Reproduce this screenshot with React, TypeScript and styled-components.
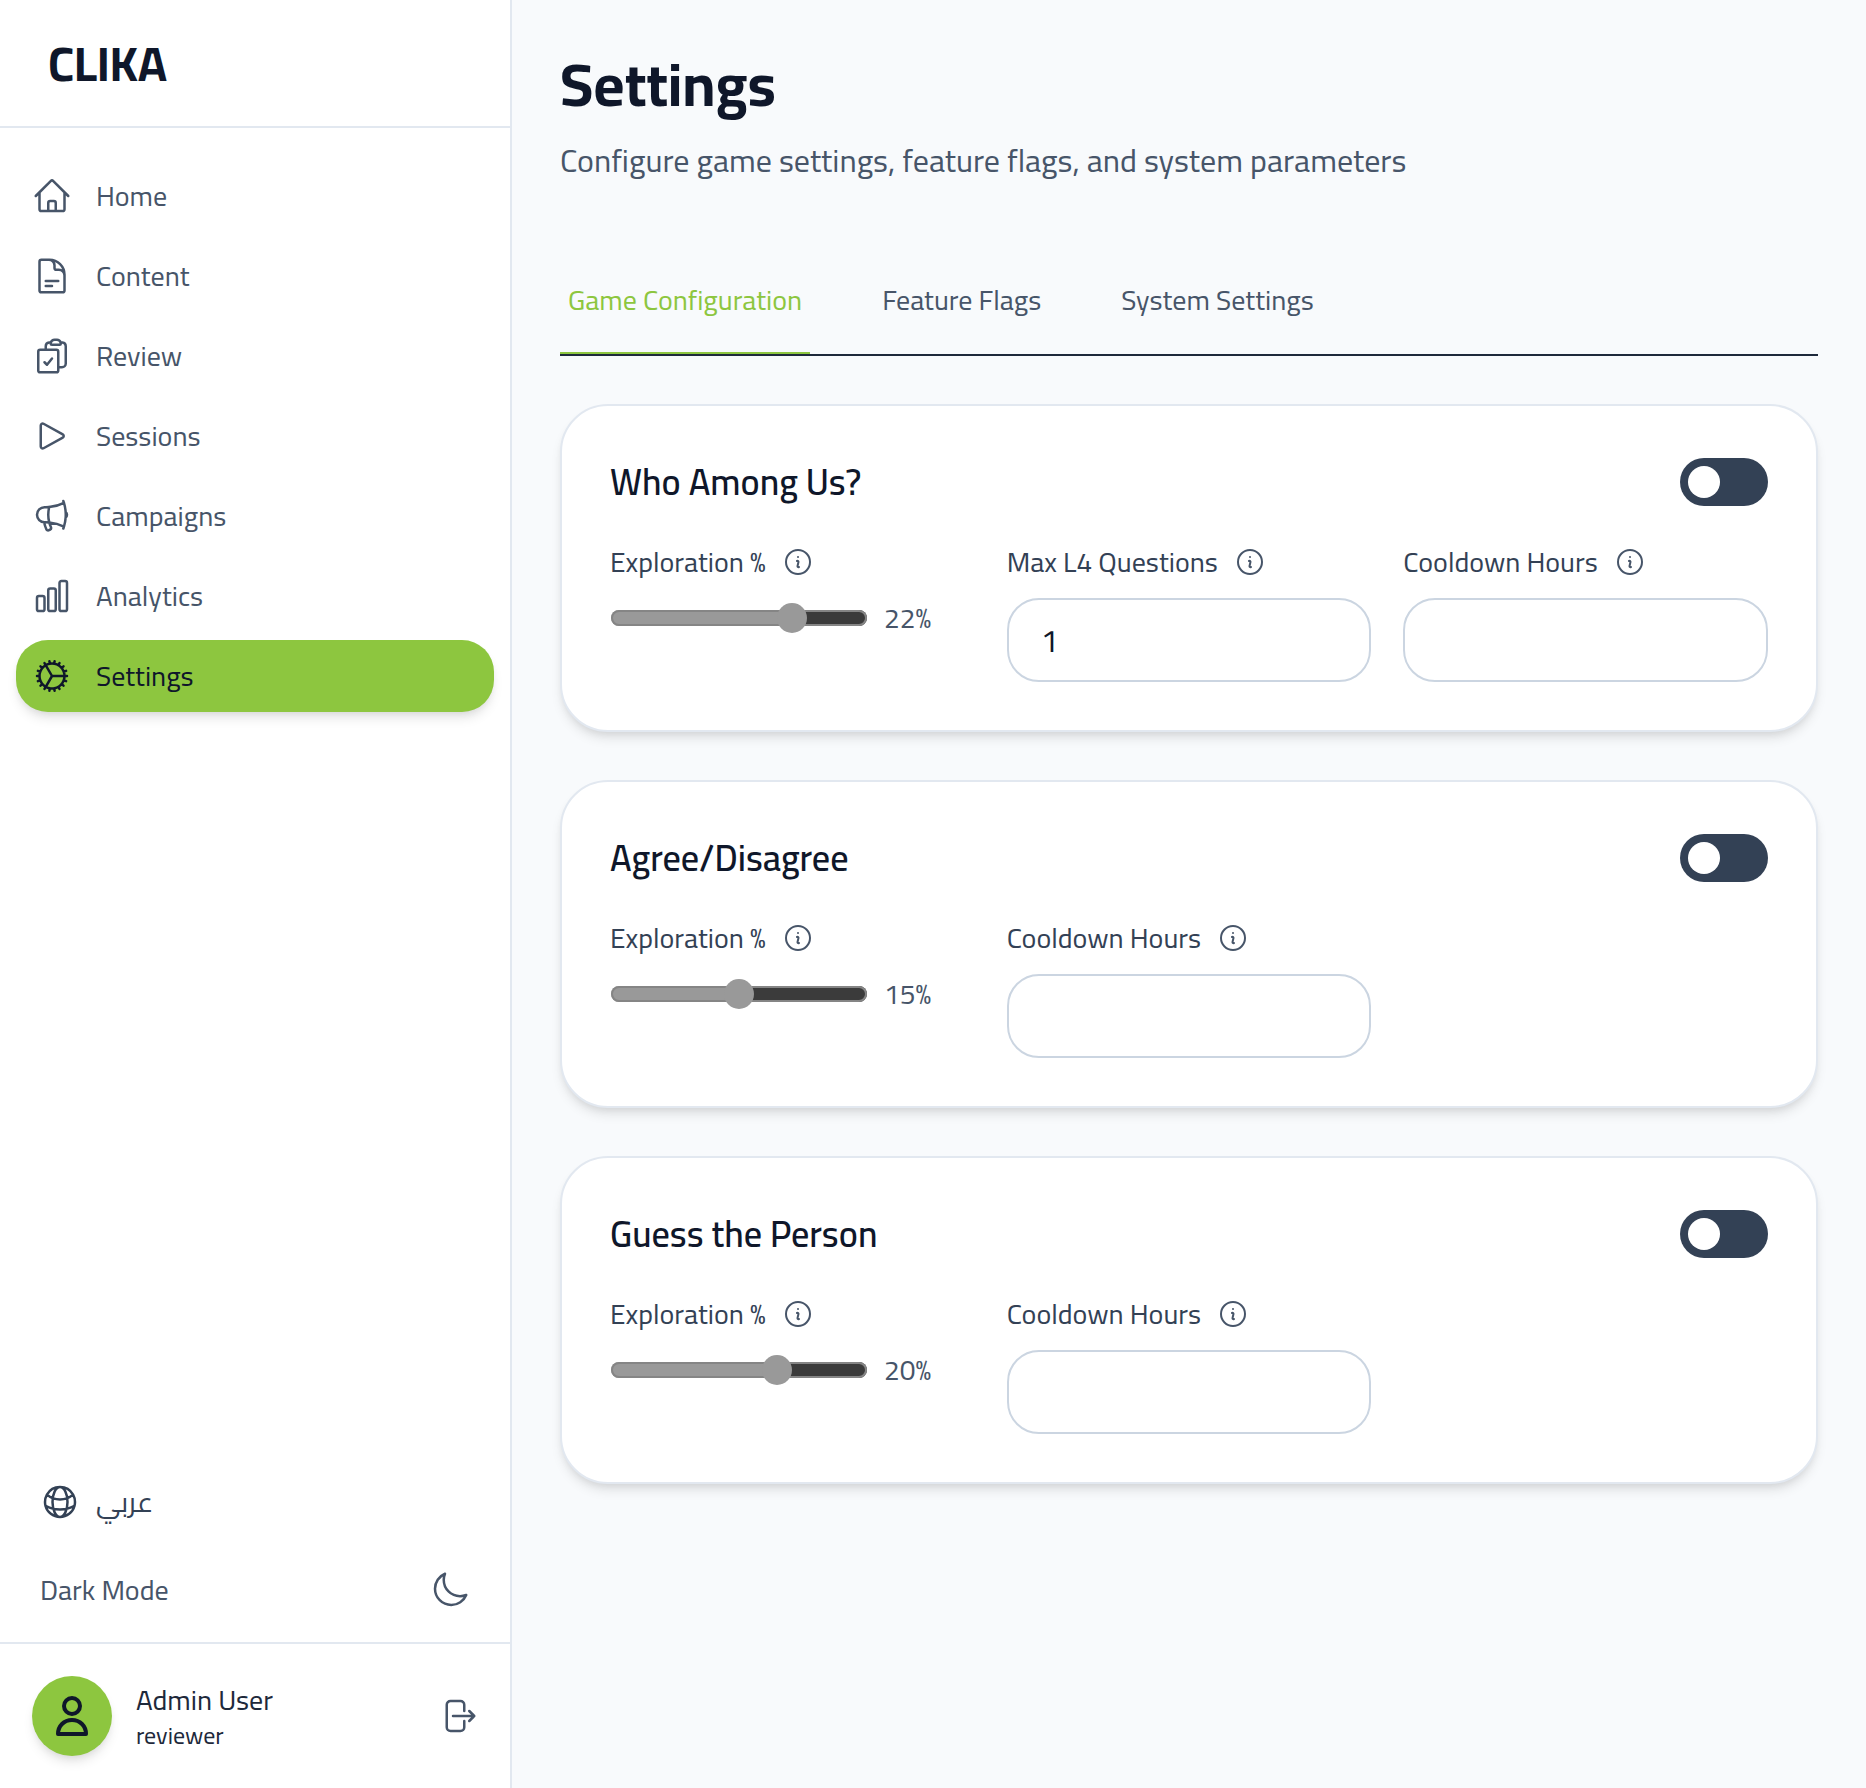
import React, { useId, useState } from "react";
import styled, { createGlobalStyle, css } from "styled-components";
import {
  HiOutlineArrowRightOnRectangle,
  HiOutlineChartBar,
  HiOutlineClipboardDocumentCheck,
  HiOutlineCog,
  HiOutlineDocumentText,
  HiOutlineGlobeAlt,
  HiOutlineHome,
  HiOutlineInformationCircle,
  HiOutlineMegaphone,
  HiOutlineMoon,
  HiOutlinePlay,
} from "react-icons/hi2";

const color = {
  page: "#f8fafc",
  surface: "#ffffff",
  line: "#e2e8f0",
  field: "#cbd5e1",
  muted: "#475569",
  label: "#334155",
  strong: "#1e293b",
  ink: "#0f172a",
  accent: "#8dc63f",
};

const shadow =
  "0 8px 12px -2px rgba(0, 0, 0, 0.1), 0 4px 8px -4px rgba(0, 0, 0, 0.1)";

const GlobalStyle = createGlobalStyle`
  *, *::before, *::after { box-sizing: border-box; }
  body {
    margin: 0;
    background: ${color.page};
    color: ${color.ink};
    font-family: Cairo, Roboto, "DejaVu Sans", sans-serif;
    font-size: 28px;
    line-height: 40px;
    -webkit-font-smoothing: antialiased;
  }
  button, input { font: inherit; color: inherit; }
  button { border: 0; padding: 0; background: none; cursor: pointer; }
  h1, h2, p { margin: 0; }
`;

const Shell = styled.div`
  display: flex;
  min-height: 100vh;
`;

const Sidebar = styled.aside`
  position: sticky;
  top: 0;
  display: flex;
  flex-direction: column;
  flex: 0 0 512px;
  height: 100vh;
  background: ${color.surface};
  border-right: 2px solid ${color.line};
`;

const Brand = styled.div`
  padding: 31px 48px;
  border-bottom: 2px solid ${color.line};
  font-size: 48px;
  font-weight: 700;
  line-height: 64px;
`;

const Nav = styled.nav`
  display: flex;
  flex: 1;
  flex-direction: column;
  gap: 8px;
  padding: 32px 16px;
`;

const NavLink = styled.a<{ $active: boolean }>`
  display: flex;
  align-items: center;
  gap: 24px;
  height: 72px;
  padding: 0 16px;
  border-radius: 32px;
  color: ${color.muted};
  text-decoration: none;

  svg {
    flex: none;
    width: 40px;
    height: 40px;
  }

  ${({ $active }) =>
    $active &&
    css`
      background: ${color.accent};
      color: ${color.ink};
      box-shadow: ${shadow};
    `}
`;

const Preferences = styled.div`
  display: flex;
  flex-direction: column;
  gap: 16px;
  padding: 16px;
  border-bottom: 2px solid ${color.line};
`;

const PreferenceButton = styled.button<{ $spread?: boolean }>`
  display: flex;
  align-items: center;
  justify-content: ${({ $spread }) => ($spread ? "space-between" : "flex-start")};
  gap: 16px;
  height: 72px;
  padding: 0 24px;
  color: ${({ $spread }) => ($spread ? color.muted : color.label)};

  svg {
    width: 40px;
    height: 40px;
  }
`;

const Account = styled.div`
  display: flex;
  align-items: center;
  gap: 24px;
  padding: 32px;
  color: ${color.strong};
`;

const Avatar = styled.div`
  display: grid;
  place-items: center;
  flex: none;
  width: 80px;
  height: 80px;
  border-radius: 50%;
  background: ${color.accent};
  color: ${color.ink};
  box-shadow: ${shadow};
`;

const Identity = styled.div`
  flex: 1;
`;

const Role = styled.p`
  font-size: 24px;
  line-height: 32px;
`;

const IconButton = styled.button<{ $size: number }>`
  display: block;
  flex: none;
  color: ${color.muted};

  svg {
    display: block;
    width: ${({ $size }) => $size}px;
    height: ${({ $size }) => $size}px;
  }
`;

const Main = styled.main`
  flex: 1;
  min-width: 0;
  padding: 48px;
`;

const Title = styled.h1`
  font-size: 60px;
  font-weight: 700;
  line-height: 72px;
`;

const Subtitle = styled.p`
  padding-top: 16px;
  color: ${color.muted};
  font-size: 32px;
  line-height: 48px;
`;

const Tabs = styled.div`
  display: flex;
  gap: 64px;
  margin: 64px 0 48px;
  border-bottom: 2px solid ${color.strong};
`;

const Tab = styled.button<{ $active: boolean }>`
  padding: 32px 8px;
  border-bottom: 2px solid
    ${({ $active }) => ($active ? color.accent : "transparent")};
  color: ${({ $active }) => ($active ? color.accent : color.muted)};
`;

const Cards = styled.div`
  display: flex;
  flex-direction: column;
  gap: 48px;
`;

const Card = styled.section`
  padding: 48px;
  border: 2px solid ${color.line};
  border-radius: 48px;
  background: ${color.surface};
  box-shadow: ${shadow};
`;

const CardHeader = styled.div`
  display: flex;
  align-items: center;
  justify-content: space-between;
  margin-bottom: 32px;
`;

const CardTitle = styled.h2`
  font-size: 36px;
  font-weight: 600;
  line-height: 56px;
`;

const Toggle = styled.input`
  appearance: none;
  width: 88px;
  height: 48px;
  margin: 0;
  padding: 8px;
  border-radius: 24px;
  background: ${color.label};
  cursor: pointer;

  &::before {
    content: "";
    display: block;
    width: 32px;
    height: 32px;
    border-radius: 50%;
    background: ${color.surface};
  }

  &:checked {
    background: ${color.accent};
  }

  &:checked::before {
    margin-left: 40px;
  }
`;

const Fields = styled.div`
  display: grid;
  grid-template-columns: repeat(3, minmax(0, 1fr));
  gap: 32px;
`;

const FieldHeader = styled.div`
  display: flex;
  align-items: center;
  gap: 16px;
  margin-bottom: 16px;
  color: ${color.label};
`;

const NumberInput = styled.input`
  display: block;
  width: 100%;
  height: 84px;
  padding: 0 32px;
  border: 2px solid ${color.field};
  border-radius: 32px;
  background: ${color.surface};
  font-size: 32px;
`;

const SliderRow = styled.div`
  display: flex;
  align-items: center;
  gap: 16px;
  color: ${color.muted};
`;

const Slider = styled.input`
  appearance: none;
  width: 256px;
  height: 16px;
  margin: 0 1px;
  border-radius: 8px;
  background: linear-gradient(
    to right,
    #999999 var(--filled),
    #3b3b3b var(--filled)
  );
  box-shadow: inset 0 0 0 2px #858585;

  &::-webkit-slider-thumb {
    appearance: none;
    width: 30px;
    height: 30px;
    border-radius: 50%;
    background: #999999;
  }
`;

const UserGlyph = () => (
  <svg width="40" height="40" viewBox="0 0 40 40" fill="none" stroke="currentColor" strokeWidth="4" strokeLinejoin="round" aria-hidden="true">
    <circle cx="20" cy="10" r="8" />
    <path d="M6 38C6 30 12 24 20 24s14 6 14 14z" />
  </svg>
);

const navItems = [
  { label: "Home", Icon: HiOutlineHome },
  { label: "Content", Icon: HiOutlineDocumentText },
  { label: "Review", Icon: HiOutlineClipboardDocumentCheck },
  { label: "Sessions", Icon: HiOutlinePlay },
  { label: "Campaigns", Icon: HiOutlineMegaphone },
  { label: "Analytics", Icon: HiOutlineChartBar },
  { label: "Settings", Icon: HiOutlineCog },
];

const tabs = ["Game Configuration", "Feature Flags", "System Settings"];

const games = [
  { name: "Who Among Us?", exploration: 22, maxQuestions: 1 },
  { name: "Agree/Disagree", exploration: 15 },
  { name: "Guess the Person", exploration: 20 },
];

const MAX_EXPLORATION = 30;

function FieldLabel({ id, text }: { id: string; text: string }) {
  return (
    <FieldHeader>
      <label htmlFor={id}>{text}</label>
      <IconButton type="button" $size={32} aria-label={`About ${text}`}>
        <HiOutlineInformationCircle />
      </IconButton>
    </FieldHeader>
  );
}

function NumberField({ text, initial }: { text: string; initial?: number }) {
  const id = useId();
  return (
    <div>
      <FieldLabel id={id} text={text} />
      <NumberInput id={id} type="number" min={0} defaultValue={initial} />
    </div>
  );
}

function ExplorationField({ initial }: { initial: number }) {
  const id = useId();
  const [value, setValue] = useState(initial);
  const filled = `${(value / MAX_EXPLORATION) * 100}%`;
  return (
    <div>
      <FieldLabel id={id} text="Exploration %" />
      <SliderRow>
        <Slider
          id={id}
          type="range"
          min={0}
          max={MAX_EXPLORATION}
          value={value}
          onChange={(event) => setValue(Number(event.target.value))}
          style={{ "--filled": filled } as React.CSSProperties}
        />
        <output htmlFor={id}>{value}%</output>
      </SliderRow>
    </div>
  );
}

export default function App() {
  const [activeTab, setActiveTab] = useState(tabs[0]);
  return (
    <>
      <GlobalStyle />
      <Shell>
        <Sidebar>
          <Brand>CLIKA</Brand>
          <Nav>
            {navItems.map(({ label, Icon }) => (
              <NavLink
                key={label}
                href={`#${label.toLowerCase()}`}
                $active={label === "Settings"}
                aria-current={label === "Settings" ? "page" : undefined}
              >
                <Icon />
                {label}
              </NavLink>
            ))}
          </Nav>
          <Preferences>
            <PreferenceButton type="button">
              <HiOutlineGlobeAlt />
              <span lang="ar">عربي</span>
            </PreferenceButton>
            <PreferenceButton type="button" $spread>
              Dark Mode
              <HiOutlineMoon />
            </PreferenceButton>
          </Preferences>
          <Account>
            <Avatar>
              <UserGlyph />
            </Avatar>
            <Identity>
              <p>Admin User</p>
              <Role>reviewer</Role>
            </Identity>
            <IconButton type="button" $size={40} aria-label="Log out">
              <HiOutlineArrowRightOnRectangle />
            </IconButton>
          </Account>
        </Sidebar>
        <Main>
          <Title>Settings</Title>
          <Subtitle>
            Configure game settings, feature flags, and system parameters
          </Subtitle>
          <Tabs role="tablist">
            {tabs.map((tab) => (
              <Tab
                key={tab}
                type="button"
                role="tab"
                aria-selected={tab === activeTab}
                $active={tab === activeTab}
                onClick={() => setActiveTab(tab)}
              >
                {tab}
              </Tab>
            ))}
          </Tabs>
          <Cards>
            {games.map((game) => (
              <Card key={game.name}>
                <CardHeader>
                  <CardTitle>{game.name}</CardTitle>
                  <Toggle type="checkbox" role="switch" aria-label={`Enable ${game.name}`} />
                </CardHeader>
                <Fields>
                  <ExplorationField initial={game.exploration} />
                  {game.maxQuestions !== undefined && (
                    <NumberField text="Max L4 Questions" initial={game.maxQuestions} />
                  )}
                  <NumberField text="Cooldown Hours" />
                </Fields>
              </Card>
            ))}
          </Cards>
        </Main>
      </Shell>
    </>
  );
}
